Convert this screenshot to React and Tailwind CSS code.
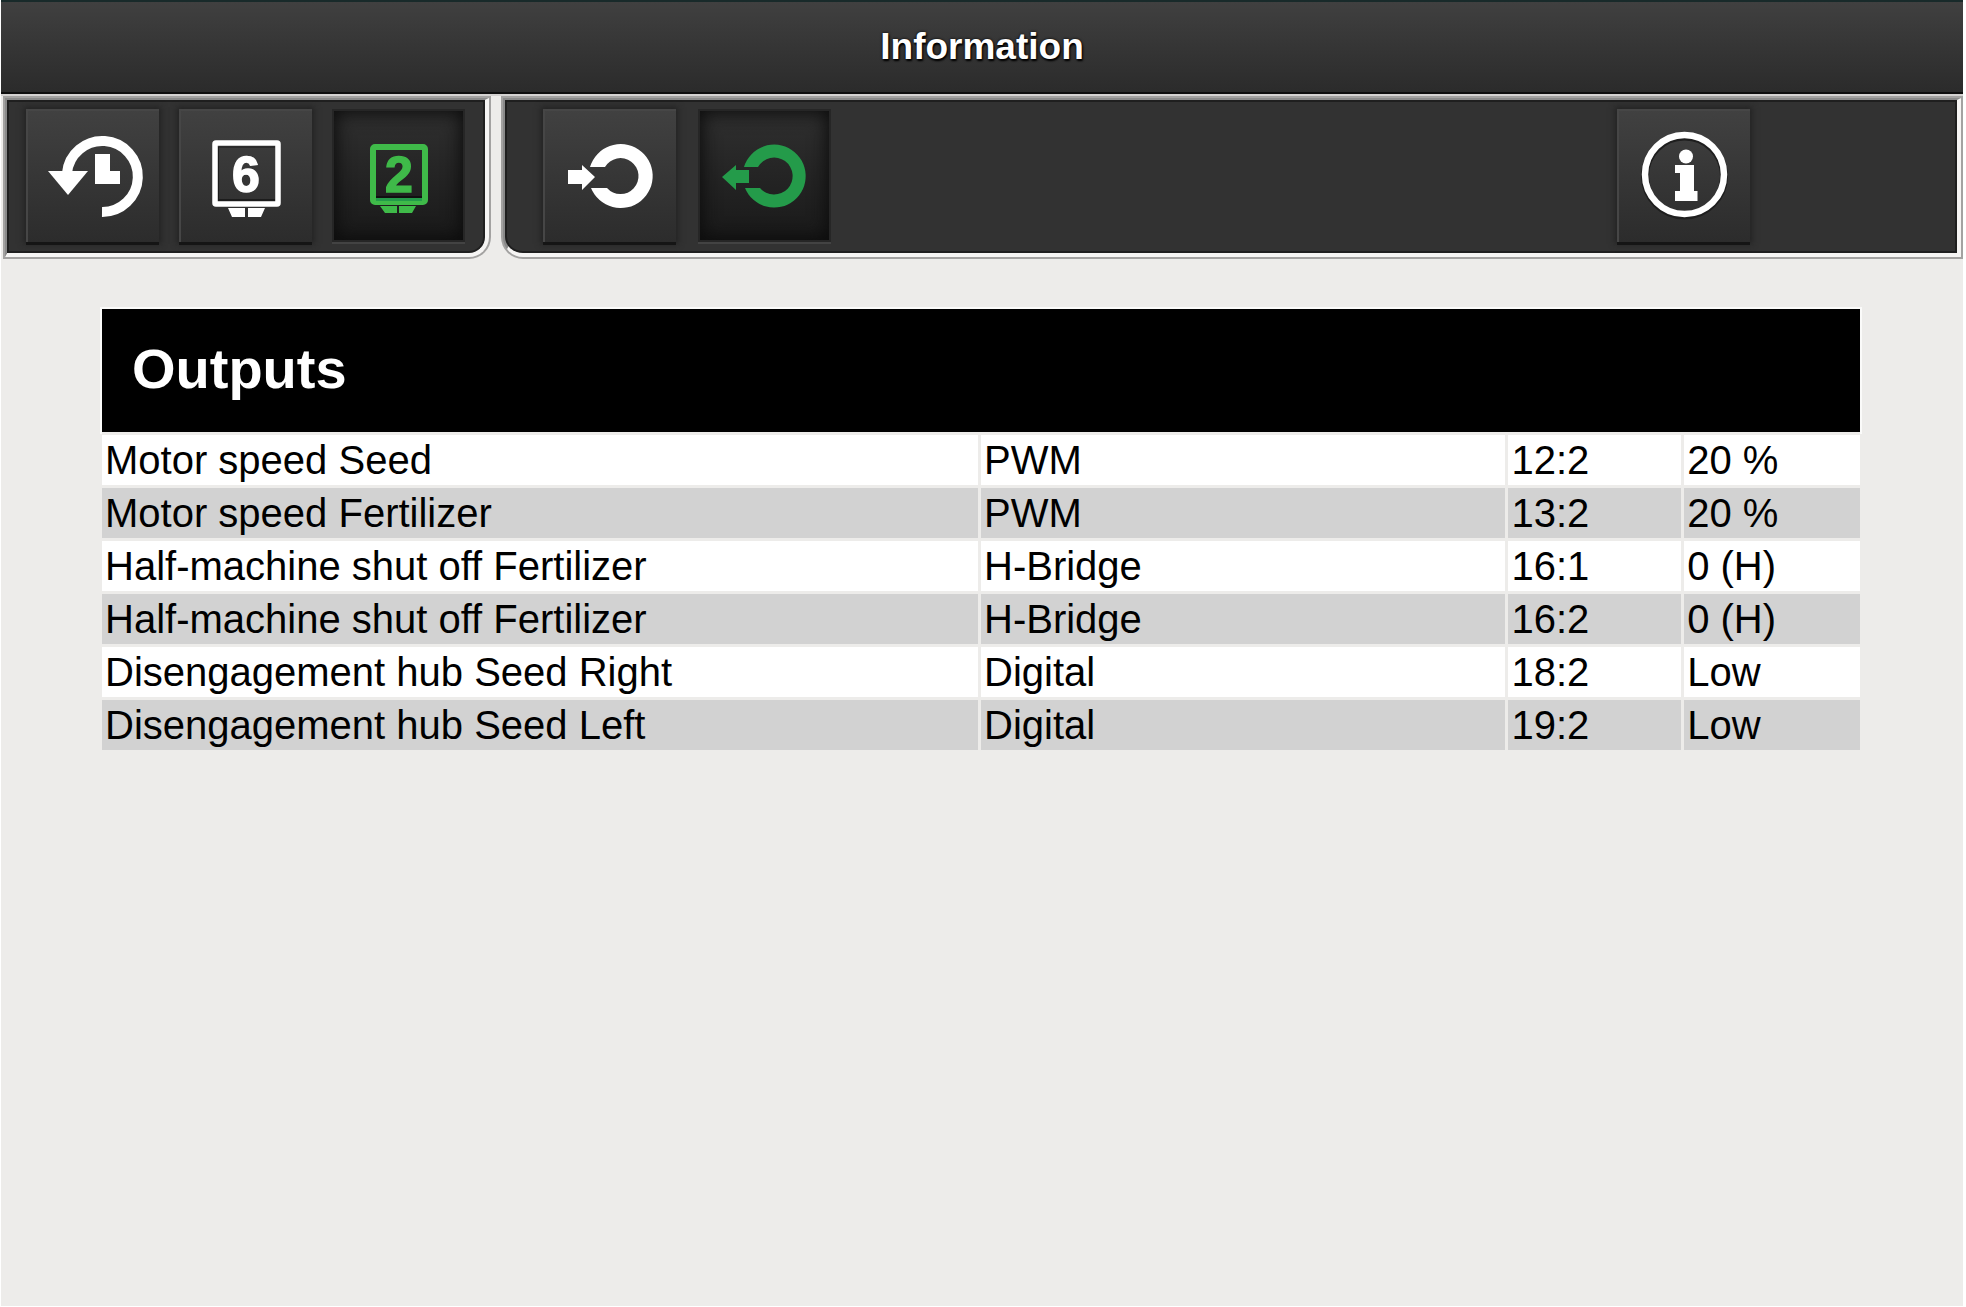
import React, { useState } from 'react';
import clsx from 'clsx';

const outputs = [
  { name: 'Motor speed Seed', type: 'PWM', pin: '12:2', value: '20 %' },
  { name: 'Motor speed Fertilizer', type: 'PWM', pin: '13:2', value: '20 %' },
  { name: 'Half-machine shut off Fertilizer', type: 'H-Bridge', pin: '16:1', value: '0 (H)' },
  { name: 'Half-machine shut off Fertilizer', type: 'H-Bridge', pin: '16:2', value: '0 (H)' },
  { name: 'Disengagement hub Seed Right', type: 'Digital', pin: '18:2', value: 'Low' },
  { name: 'Disengagement hub Seed Left', type: 'Digital', pin: '19:2', value: 'Low' },
];

const HistoryIcon = () => (
  <svg viewBox="0 0 133 133" className="w-full h-full" aria-hidden="true">
    <path d="M41 64A35.5 35.5 0 1 1 76 103" fill="none" stroke="#fff" strokeWidth="10" />
    <path d="M22 62H62L42 86Z" fill="#fff" />
    <path d="M69 45H84V62H94V75H69Z" fill="#fff" />
  </svg>
);

const TerminalSixIcon = () => (
  <svg viewBox="0 0 133 133" className="w-full h-full" aria-hidden="true">
    <rect x="36" y="34" width="63" height="61" rx="1" fill="none" stroke="#fff" strokeWidth="5.5" />
    <path d="M39.5 92V38H96" fill="none" stroke="#1c1c1c" strokeWidth="1" />
    <path d="M39 91H96" fill="none" stroke="#1c1c1c" strokeWidth="2" />
    <path d="M49 99H66V108H53ZM69 99H86L82 108H69Z" fill="#fff" />
    <text x="67" y="83" textAnchor="middle" fill="#fff" stroke="#fff" strokeWidth="1.5" className="font-bold text-[50px]">6</text>
  </svg>
);

const TerminalTwoIcon = () => (
  <svg viewBox="0 0 133 133" className="w-full h-full" aria-hidden="true">
    <rect x="41" y="38" width="52" height="55" rx="2" fill="none" stroke="#3fba49" strokeWidth="6" />
    <path d="M44 88H90" stroke="#111" strokeWidth="2" />
    <path d="M44 90.5H90" stroke="#249b4a" strokeWidth="3" />
    <path d="M48 97H65V104H53ZM67 97H84L80 104H67Z" fill="#3fba49" />
    <text x="67" y="83" textAnchor="middle" fill="#3fba49" stroke="#3fba49" strokeWidth="1.5" className="font-bold text-[50px]">2</text>
  </svg>
);

const InputIcon = () => (
  <svg viewBox="0 0 133 133" className="w-full h-full" aria-hidden="true">
    <path d="M47 58A32 32 0 1 1 48 79H64A18 18 0 1 0 62 58Z" fill="#fff" />
    <path d="M25 61H39V56L52 68L39 81V75H25Z" fill="#fff" />
  </svg>
);

const OutputIcon = () => (
  <svg viewBox="0 0 133 133" className="w-full h-full" aria-hidden="true">
    <path d="M46 58A31.5 31.5 0 1 1 47 79H62A18.5 18.5 0 1 0 60 58Z" fill="#249b4a" />
    <path d="M51 61H38V56L24 68L38 81V74H51Z" fill="#249b4a" />
  </svg>
);

const InfoIcon = () => (
  <svg viewBox="0 0 133 133" className="w-full h-full" aria-hidden="true">
    <circle cx="67.5" cy="67" r="39.5" fill="none" stroke="#1e1e1e" strokeWidth="8" />
    <circle cx="67.5" cy="65.5" r="39.5" fill="none" stroke="#fff" strokeWidth="6.5" />
    <circle cx="69" cy="47.5" r="7" fill="#fff" />
    <path d="M58 56H77V82H80.5V92H58V82H63V64H58Z" fill="#fff" />
  </svg>
);

const viewTabs = [
  { id: 'history', label: 'History', Icon: HistoryIcon },
  { id: 'terminal6', label: 'Terminal 6', Icon: TerminalSixIcon },
  { id: 'terminal2', label: 'Terminal 2', Icon: TerminalTwoIcon },
];

const signalTabs = [
  { id: 'inputs', label: 'Inputs', Icon: InputIcon },
  { id: 'outputs', label: 'Outputs', Icon: OutputIcon },
];

const ToolButton = ({ label, active, onClick, className, children }) => (
  <button
    type="button"
    aria-label={label}
    aria-pressed={active}
    onClick={onClick}
    className={clsx(
      'size-[133px] shrink-0 bg-linear-to-b',
      active
        ? 'from-[#303030] to-[#191919] shadow-[inset_0_0_0_2px_#262626,inset_0_0_18px_4px_#0c0c0c,0_2px_0_#434343]'
        : 'from-[#414141] to-[#2c2c2c] shadow-[inset_2px_2px_0_#464646,0_3px_0_#151515,0_0_6px_2px_#222222]',
      className
    )}
  >
    {children}
  </button>
);

const App = () => {
  const [view, setView] = useState('terminal2');
  const [signal, setSignal] = useState('outputs');

  return (
    <div className="min-h-screen bg-white pl-px pr-[3px] pb-px flex flex-col font-['Liberation_Sans',Arial,sans-serif]">
      {/* Title bar */}
      <header className="h-[94px] border-t-2 border-t-[#182a2a] border-b-2 border-b-[#0e0e0e] bg-linear-to-b from-[#404040] to-[#2b2b2b] flex items-center justify-center">
        <h1 className="text-white text-[37px] leading-10 font-bold [text-shadow:0_0_3px_#000,1px_2px_2px_#000]">
          Information
        </h1>
      </header>

      <main className="flex-1 bg-[#edecea]">
        {/* Toolbar */}
        <div className="border-t-2 border-[#d4d2d1] pt-0.5 pb-0.5 pl-1 pr-0.5 flex gap-3.5">
          <nav
            aria-label="Views"
            className="flex gap-5 pt-[9px] pb-[11px] pl-[19px] pr-5 bg-[#323232] border-t-2 border-l-2 border-r-4 border-b-4 border-t-[#8a8a8a] border-l-[#8a8a8a] border-r-[#f6f5f4] border-b-[#f6f5f4] rounded-br-[20px] shadow-[0_0_0_2px_#a3a2a1,inset_0_0_0_2px_#1f1f1f]"
          >
            {viewTabs.map(({ id, label, Icon }) => (
              <ToolButton key={id} label={label} active={view === id} onClick={() => setView(id)}>
                <Icon />
              </ToolButton>
            ))}
          </nav>
          <nav
            aria-label="Signals"
            className="flex-1 flex gap-[22px] pt-[9px] pb-[11px] pl-[38px] pr-[207px] bg-[#323232] border-t-2 border-l-2 border-r-4 border-b-4 border-t-[#8a8a8a] border-l-[#8a8a8a] border-r-[#f6f5f4] border-b-[#f6f5f4] rounded-bl-[20px] shadow-[0_0_0_2px_#a3a2a1,inset_0_0_0_2px_#1f1f1f]"
          >
            {signalTabs.map(({ id, label, Icon }) => (
              <ToolButton key={id} label={label} active={signal === id} onClick={() => setSignal(id)}>
                <Icon />
              </ToolButton>
            ))}
            <ToolButton label="Information" active={false} className="ml-auto">
              <InfoIcon />
            </ToolButton>
          </nav>
        </div>

        {/* Outputs */}
        <section className="pt-[50px] pl-[101px] pr-[103px]">
          <h2 className="h-[123px] px-[30px] pb-1 flex items-center bg-black text-white text-[56px] leading-[64px] font-bold shadow-[0_0_0_2px_#fbfbfa]">
            Outputs
          </h2>
          <table className="w-full table-fixed border-separate border-spacing-0 text-[40px] leading-[50px] text-black text-left">
            <colgroup>
              <col className="w-[50%]" />
              <col className="w-[30%]" />
              <col className="w-[10%]" />
              <col className="w-[10%]" />
            </colgroup>
            <tbody>
              {outputs.map((row, index) => (
                <tr key={index} className="bg-white even:bg-[#d2d2d2]">
                  {[row.name, row.type, row.pin, row.value].map((cell, i) => (
                    <td
                      key={i}
                      className="p-0 pl-[3px] border-t-3 border-r-3 last:border-r-0 border-[#edecea] whitespace-nowrap"
                    >
                      {cell}
                    </td>
                  ))}
                </tr>
              ))}
            </tbody>
          </table>
        </section>
      </main>
    </div>
  );
};

export default App;
